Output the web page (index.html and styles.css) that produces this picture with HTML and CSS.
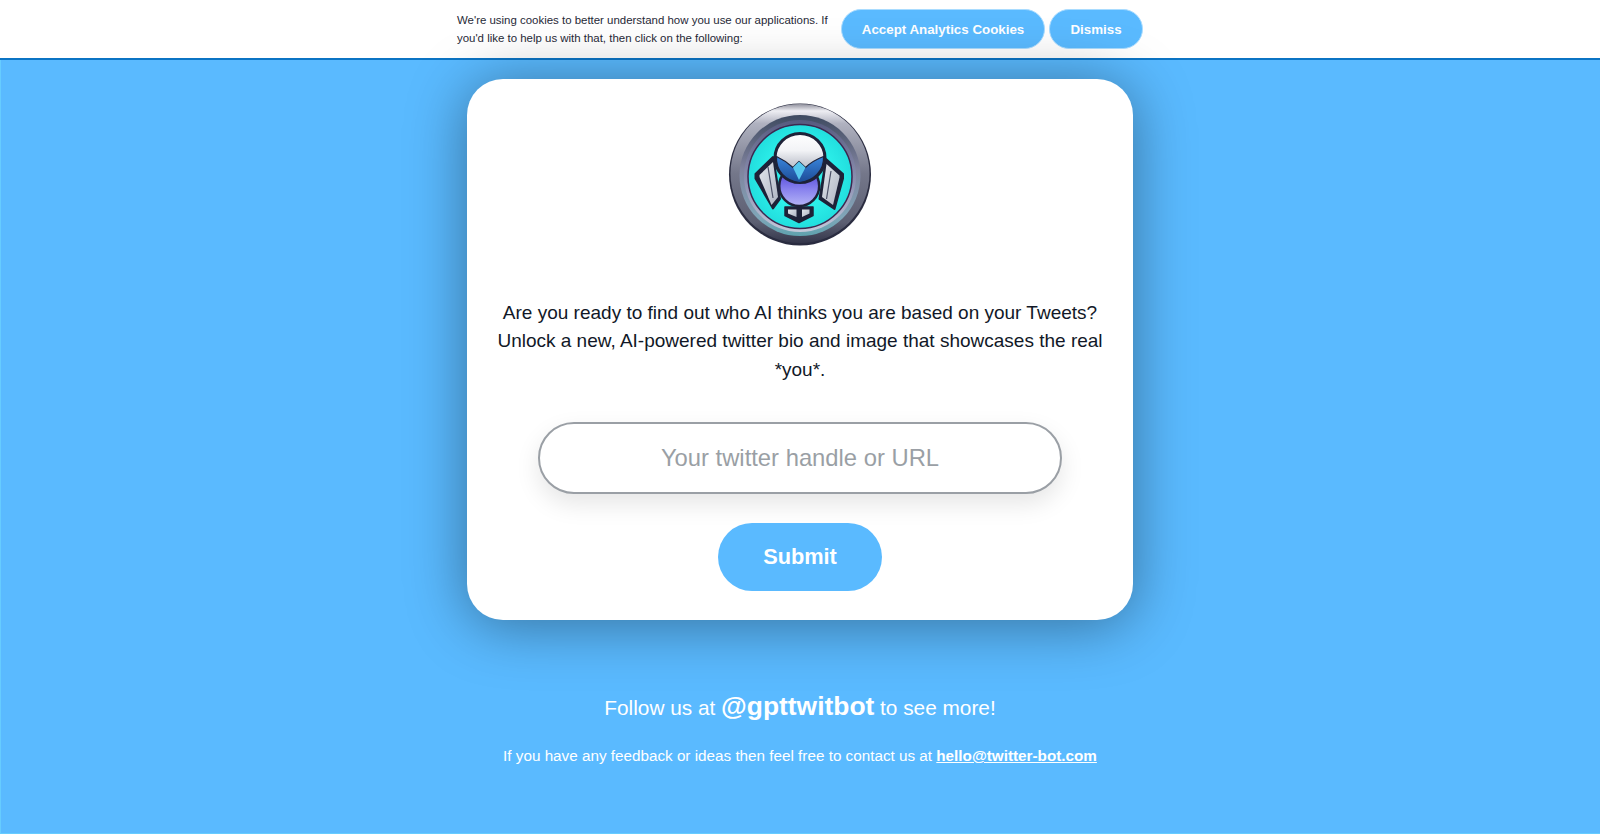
FILE: index.html
```html
<!DOCTYPE html>
<html lang="en">
<head>
    <meta charset="UTF-8">
    <meta name="viewport" content="width=device-width, initial-scale=1.0">
    <title>Twitter Bot</title>
    <link rel="stylesheet" href="styles.css">
</head>
<body>
    <div class="cookie-bar">
        <div class="cookie-inner">
            <p class="cookie-text">We're using cookies to better understand how you use our applications. If you'd like to help us with that, then click on the following:</p>
            <button type="button" class="cookie-btn cookie-accept">Accept Analytics Cookies</button>
            <button type="button" class="cookie-btn cookie-dismiss">Dismiss</button>
        </div>
    </div>

    <div class="page">
        <div class="card">
            <svg class="logo" viewBox="0 0 144 144" role="img" aria-label="Twitter bot logo">
                <defs>
                    <linearGradient id="ringOuter" x1="0" y1="0" x2="0" y2="1">
                        <stop offset="0" stop-color="#8f909c"/>
                        <stop offset="0.05" stop-color="#eeeef3"/>
                        <stop offset="0.14" stop-color="#b0b2c0"/>
                        <stop offset="0.5" stop-color="#74778a"/>
                        <stop offset="0.85" stop-color="#5c5f72"/>
                        <stop offset="1" stop-color="#34364a"/>
                    </linearGradient>
                    <linearGradient id="ringMiddle" x1="0" y1="0" x2="0" y2="1">
                        <stop offset="0" stop-color="#3e4a60"/>
                        <stop offset="0.45" stop-color="#80839e"/>
                        <stop offset="0.85" stop-color="#7fa6b8"/>
                        <stop offset="1" stop-color="#5fa2ae"/>
                    </linearGradient>
                    <linearGradient id="ringInner" x1="0" y1="0" x2="0" y2="1">
                        <stop offset="0" stop-color="#565a7e"/>
                        <stop offset="0.6" stop-color="#9296b6"/>
                        <stop offset="1" stop-color="#c4c9da"/>
                    </linearGradient>
                    <radialGradient id="cyan" cx="0.5" cy="0.5" r="0.5">
                        <stop offset="0.6" stop-color="#2cf0ea"/>
                        <stop offset="1" stop-color="#22dede"/>
                    </radialGradient>
                    <linearGradient id="dome" x1="0" y1="0" x2="0" y2="1">
                        <stop offset="0" stop-color="#ffffff"/>
                        <stop offset="0.35" stop-color="#f2f3f6"/>
                        <stop offset="0.6" stop-color="#c8cbd4"/>
                    </linearGradient>
                    <linearGradient id="mask" x1="0" y1="0" x2="0" y2="1">
                        <stop offset="0" stop-color="#3a86dc"/>
                        <stop offset="1" stop-color="#1c4a96"/>
                    </linearGradient>
                    <linearGradient id="belly" x1="0" y1="0" x2="0" y2="1">
                        <stop offset="0.25" stop-color="#5e54de"/>
                        <stop offset="0.6" stop-color="#8a84ee"/>
                        <stop offset="1" stop-color="#b4b4f6"/>
                    </linearGradient>
                    <linearGradient id="steel" x1="0" y1="0" x2="1" y2="1">
                        <stop offset="0" stop-color="#e2e6ec"/>
                        <stop offset="1" stop-color="#aeb4c2"/>
                    </linearGradient>
                </defs>
                <circle cx="72" cy="72.500" r="71" fill="#2a2c40"/>
                <circle cx="72" cy="71.500" r="69.500" fill="url(#ringOuter)"/>
                <circle cx="72" cy="73.500" r="60.500" fill="url(#ringMiddle)"/>
                <circle cx="72" cy="74" r="56" fill="url(#ringInner)"/>
                <circle cx="72" cy="74.500" r="52" fill="url(#cyan)" stroke="#3c2850" stroke-width="1.500"/>

                <path d="M27.500 72 L45 55 L52 97 L45 106.500 L27.500 76.500 Z" fill="#1e2238" stroke="#1e2238" stroke-width="2" stroke-linejoin="round"/>
                <path d="M31.500 73 L45 60 L50 95 L43.500 103 L31.500 75 Z" fill="url(#steel)"/>
                <path d="M40 65 L45 96" stroke="#4a4f66" stroke-width="1.200" fill="none"/>
                <path d="M115 72 L98 57 L91.500 97 L106.500 107 L115 76.500 Z" fill="#1e2238" stroke="#1e2238" stroke-width="2" stroke-linejoin="round"/>
                <path d="M111.500 73.500 L98.500 62 L94 95 L105 103 L111.500 75.500 Z" fill="url(#steel)"/>
                <path d="M103 69 L98.500 97" stroke="#4a4f66" stroke-width="1.200" fill="none"/>
                <path d="M57 105 L85 105 L85 113.500 L71 120.500 L57 113.500 Z" fill="#1e2238" stroke="#1e2238" stroke-width="1.500" stroke-linejoin="round"/>
                <path d="M60 107.500 L68.500 107.500 L68.500 115 L60 111.500 Z" fill="url(#steel)"/>
                <path d="M74 107.500 L81.500 107.500 L81.500 111.500 L74 115 Z" fill="url(#steel)"/>

                <circle cx="71.200" cy="84" r="20" fill="url(#belly)" stroke="#1e2238" stroke-width="2.500"/>
                <ellipse cx="72" cy="56" rx="25" ry="24.500" fill="url(#dome)" stroke="#1e2238" stroke-width="3"/>
                <path d="M48.500 54.500 C54 57 60 61 65 65.500 L71 59.500 L77.500 65.500 C82 61 89 57 95.500 54.500 C96.500 69 85 79 71.500 80.500 C58 79 47.500 69 48.500 54.500 Z" fill="url(#mask)" stroke="#1e2238" stroke-width="1.200" stroke-linejoin="round"/>
                <path d="M65 65.500 L71 59.500 L77.500 65.500 L71 78 Z" fill="#58c8ee"/>
            </svg>

            <p class="intro">Are you ready to find out who AI thinks you are based on your Tweets? Unlock a new, AI-powered twitter bio and image that showcases the real *you*.</p>

            <form class="handle-form">
                <input type="text" class="handle-input" placeholder="Your twitter handle or URL">
                <button type="button" class="submit-btn">Submit</button>
            </form>
        </div>

        <p class="follow">Follow us at <a href="#" class="follow-link">@gpttwitbot</a> to see more!</p>
        <p class="contact">If you have any feedback or ideas then feel free to contact us at <a href="#" class="contact-link">hello@twitter-bot.com</a></p>
    </div>
</body>
</html>
```

FILE: styles.css
```css
html, body {
    height: 100%;
}

body {
    margin: 0;
    display: flex;
    flex-direction: column;
    overflow: hidden;
    font-family: "Liberation Sans", Arial, sans-serif;
    background-color: #5abaff;
}

.cookie-bar {
    flex: none;
    height: 58px;
    background-color: #fff;
    border-bottom: 2px solid #0b74c4;
}

.cookie-inner {
    width: 686px;
    height: 58px;
    margin: 0 auto;
    display: flex;
    align-items: center;
}

.cookie-text {
    flex: 1;
    margin: 0;
    font-size: 11.44px;
    line-height: 18px;
    color: #1f2937;
}

.cookie-btn {
    height: 40px;
    border: 1px solid #a9dcff;
    border-radius: 20px;
    background-color: #5abaff;
    color: #fff;
    font-family: inherit;
    font-size: 13.333px;
    font-weight: bold;
}

.cookie-accept {
    width: 204px;
    margin-left: 5px;
}

.cookie-dismiss {
    width: 94px;
    margin-left: 4px;
}

.page {
    flex: 1;
    display: flex;
    flex-direction: column;
    align-items: center;
    padding-top: 19px;
    box-shadow: inset 1px -1px 0 #66ccff;
}

.card {
    width: 666px;
    height: 541px;
    box-sizing: border-box;
    padding-top: 23px;
    display: flex;
    flex-direction: column;
    align-items: center;
    background-color: #fff;
    border-radius: 36px;
    box-shadow: 0 5px 60px rgba(0, 0, 0, 0.4);
}

.logo {
    width: 144px;
    height: 144px;
    flex: none;
}

.intro {
    width: 620px;
    margin: 53px 0 0;
    font-size: 19px;
    line-height: 28.25px;
    text-align: center;
    color: #111827;
}

.handle-form {
    display: flex;
    flex-direction: column;
    align-items: center;
    margin-top: 38px;
}

.handle-input {
    width: 524px;
    height: 72px;
    box-sizing: border-box;
    border: 2px solid #9a9fa5;
    border-radius: 36px;
    background-color: #fff;
    box-shadow: 0 10px 25px rgba(0, 0, 0, 0.1);
    font-family: inherit;
    font-size: 23.8px;
    text-align: center;
    color: #111827;
}

.handle-input::placeholder {
    color: #9a9fa5;
    opacity: 1;
}

.submit-btn {
    width: 164px;
    height: 68px;
    margin-top: 29px;
    border: none;
    border-radius: 34px;
    background-color: #5abaff;
    color: #fff;
    font-family: inherit;
    font-size: 21.76px;
    font-weight: bold;
}

.follow {
    margin: 70px 0 0;
    font-size: 20.8px;
    line-height: 32px;
    color: #fff;
}

.follow-link {
    font-size: 26.4px;
    font-weight: bold;
    color: #fff;
    text-decoration: none;
}

.contact {
    margin: 20px 0 0;
    font-size: 15.25px;
    line-height: 24px;
    color: #fff;
}

.contact-link {
    font-weight: bold;
    color: #fff;
}
```
